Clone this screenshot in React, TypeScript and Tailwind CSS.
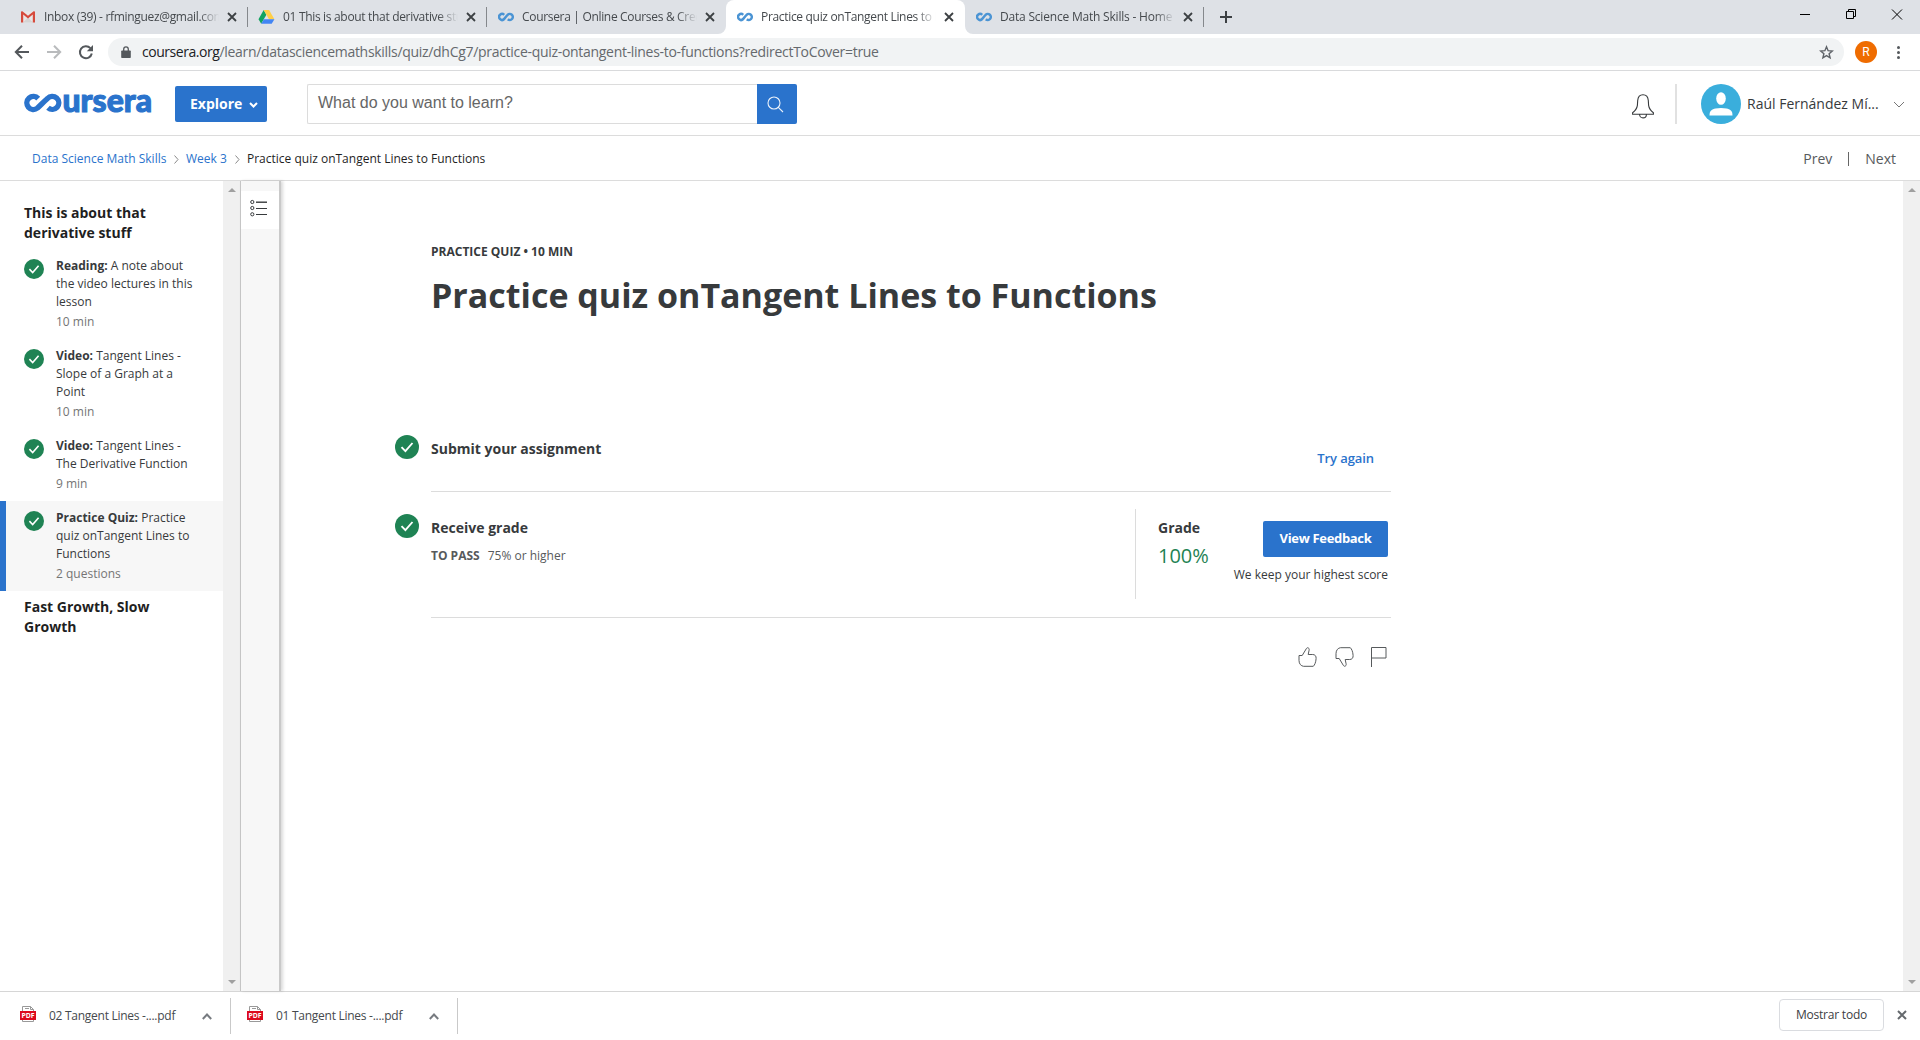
import type { ReactNode } from 'react';

function InfinityMark() {
  return (
    <svg width="16" height="10" viewBox="0 0 16 10" fill="none" stroke="#4b94d4" strokeWidth="2.5">
      <path d="M6.200 2.800A3 3 0 1 0 5.800 7.400C7 6.200 8 4.400 9.600 2.900A3 3 0 1 1 9.800 7.200" />
    </svg>
  );
}

function GmailIcon() {
  return (
    <svg width="16" height="16" viewBox="0 0 16 16">
      <path d="M2 2.5h12v11H2z" fill="#e9e7e7" />
      <path d="M3 13.5l5-5 5 5z" fill="#d5d3d3" />
      <path d="M1 13.5V3.2c0-.9.9-1.3 1.7-.8L8 6.8l5.300-4.400c.8-.5 1.700-.1 1.700.8v10.300h-2.200V5.600L8 9.600 3.200 5.600v7.900z" fill="#d64a3c" />
    </svg>
  );
}

function DriveIcon() {
  return (
    <svg width="17" height="16" viewBox="0 0 17 16">
      <path d="M5.700 1L0.500 10.200l2.700 4.600L8.400 5.700z" fill="#11a360" />
      <path d="M5.700 1h5.400l5.300 9.200H11z" fill="#ffcf48" />
      <path d="M5.900 10.200h10.500l-2.700 4.600H3.200z" fill="#4285f4" />
    </svg>
  );
}

function TabClose() {
  return (
    <svg width="10" height="10" viewBox="0 0 10 10" stroke="#3c4043" strokeWidth="1.8" className="shrink-0">
      <path d="M1 1l8 8M9 1L1 9" />
    </svg>
  );
}

function Tab({ icon, title, active, last, bare }: { icon: ReactNode; title: string; active?: boolean; last?: boolean; bare?: boolean }) {
  return (
    <div className={`relative flex h-[34px] w-[239px] shrink-0 items-center pl-[10px] ${active ? 'rounded-t-lg bg-white' : ''}`}>
      {active && (
        <>
          <svg className="absolute bottom-0 -left-2" width="8" height="8"><path d="M8 0v8H0a8 8 0 0 0 8-8z" fill="#fff" /></svg>
          <svg className="absolute -right-2 bottom-0" width="8" height="8"><path d="M0 0v8h8a8 8 0 0 1-8-8z" fill="#fff" /></svg>
        </>
      )}
      <div className="flex w-[17px] shrink-0 justify-center">{icon}</div>
      <div className={`ml-[8px] w-[175px] overflow-hidden text-xs whitespace-nowrap text-[#45494d] [mask-image:linear-gradient(to_right,#000_155px,transparent_175px)] ${last ? 'tracking-[-0.2px]' : 'tracking-[-0.32px]'}`}>{title}</div>
      <div className="ml-[8px]"><TabClose /></div>
      {!active && !bare && <div className="absolute top-[7px] right-0 h-5 w-px bg-[#85888c]" />}
    </div>
  );
}

function TabStrip() {
  return (
    <div className="flex h-[34px] bg-[#dee1e6] pl-[9px]">
      <Tab icon={<GmailIcon />} title="Inbox (39) - rfminguez@gmail.com" />
      <Tab icon={<DriveIcon />} title="01 This is about that derivative stuff" />
      <Tab icon={<InfinityMark />} title="Coursera | Online Courses & Credentials" bare />
      <Tab icon={<InfinityMark />} title="Practice quiz onTangent Lines to Functions" active />
      <Tab icon={<InfinityMark />} title="Data Science Math Skills - Home" last />
      <svg className="mt-[11px] ml-4" width="13" height="13" stroke="#3c4043" strokeWidth="2"><path d="M6 0v12M0 6h12" /></svg>
      <svg className="mt-[9px] mr-[17px] ml-auto" width="103" height="11" fill="none" stroke="#000">
        <path d="M0 5.500h10M46.500 2.500h7v7h-7zM48.500 2.500v-2h7v7h-2M92 .5l10 10M102 .5l-10 10" />
      </svg>
    </div>
  );
}

function AddressBar() {
  return (
    <div className="flex h-[37px] items-center border-b border-[#d9dadc] bg-white">
      <svg className="ml-[14px]" width="80" height="16" viewBox="0 0 80 16" fill="none" strokeWidth="2">
        <path d="M15 8H2M8 1.700L1.800 8 8 14.300" stroke="#54585c" />
        <path d="M33 8h13M40 1.700L46.200 8 40 14.300" stroke="#b9bbbd" />
        <path d="M76.400 4.200A6 6 0 1 0 77.800 9.500" stroke="#54585c" />
        <path d="M79 1v6.200h-6.200z" fill="#54585c" />
      </svg>
      <div className="ml-[14px] flex h-7 w-[1736px] items-center rounded-full bg-[#f1f3f4] pr-[10px] pl-[13px]">
        <svg width="10" height="13" viewBox="0 0 10 13">
          <path d="M1 4.500h8q.8 0 .8.800v5.900q0 .8-.8.800H1q-.8 0-.8-.8V5.300q0-.8.8-.8z" fill="#54585c" />
          <path d="M2.700 5V3.200a2.300 2.300 0 0 1 4.600 0V5" fill="none" stroke="#54585c" strokeWidth="1.300" />
        </svg>
        <div className="ml-[11px] text-sm whitespace-nowrap text-[#65696d]">
          <span className="tracking-[-0.46px] text-[#202124]">coursera.org</span>
          <span className="tracking-[-0.3px]">/learn/datasciencemathskills/quiz/dhCg7/practice-quiz-ontangent-lines-to-functions?redirectToCover=true</span>
        </div>
        <svg className="ml-auto" width="15" height="15" viewBox="0 0 15 15" fill="none" stroke="#5f6368" strokeWidth="1.400">
          <path d="M7.500 1.800l1.600 3.900 4.200.3-3.200 2.700 1 4.100-3.600-2.200-3.600 2.200 1-4.100L1.700 6l4.200-.3z" />
        </svg>
      </div>
      <div className="ml-[11px] flex size-[22px] items-center justify-center rounded-full bg-[#ef6c00] font-['Roboto'] text-[12px] text-white">R</div>
      <div className="ml-[20px] flex flex-col gap-[2px]">
        <i className="size-[3px] rounded-full bg-[#54585c]" />
        <i className="size-[3px] rounded-full bg-[#54585c]" />
        <i className="size-[3px] rounded-full bg-[#54585c]" />
      </div>
    </div>
  );
}

function Logo() {
  return (
    <svg className="-mt-[2px] ml-6" width="128" height="24" viewBox="0 0 128 24">
      <path d="M14.200 7.600A6.500 6.500 0 1 0 13.500 17C17 13.800 19.500 11 23.500 7.500A6.500 6.500 0 1 1 24 16.800" fill="none" stroke="#2a73cc" strokeWidth="5.400" />
      <text x="38.500" y="20.600" textLength="89.500" lengthAdjust="spacingAndGlyphs" fontSize="33" fontWeight="900" fontFamily="Lato, sans-serif" fill="#2a73cc" stroke="#2a73cc" strokeWidth="1.100">ursera</text>
    </svg>
  );
}

function Header() {
  return (
    <header className="flex h-[65px] items-center border-b border-[#dcdcdc] bg-white pt-[2px]">
      <Logo />
      <button className="ml-[23px] flex h-9 w-[92px] items-center rounded-[2px] bg-[#2a73cc] pl-[15px] text-sm font-bold text-white">
        Explore
        <svg className="mt-[2px] ml-[7px]" width="9" height="6" fill="none" stroke="#fff" strokeWidth="2"><path d="M1 1l3.500 3.500L8 1" /></svg>
      </button>
      <div className="ml-10 flex h-10 w-[490px]">
        <div className="flex flex-1 items-center rounded-l-[2px] border border-r-0 border-[#dcdcdc] pb-[2px] pl-[10px] font-['Liberation_Sans'] text-base text-[#666]">What do you want to learn?</div>
        <div className="flex w-10 items-center justify-center rounded-r-[2px] bg-[#2a73cc] pr-1">
          <svg width="17" height="17" fill="none" stroke="#fff" strokeOpacity=".9" strokeWidth="1.100"><circle cx="7" cy="7" r="6" /><path d="M11.300 11.300l4.700 4.700" /></svg>
        </div>
      </div>
      <svg className="mt-1 ml-auto" width="22" height="25" viewBox="0 0 22 25" fill="none" stroke="#373a3c" strokeWidth="1.100">
        <path d="M.600 20.300v-1.600C3.200 16.800 4.900 14.400 5.400 11.300L5.700 6.500C6 2.800 8 .7 11 .700s5 2.100 5.300 5.800l.3 4.800c.5 3.100 2.200 5.500 4.800 7.400v1.600zM7.600 20.500a3.400 3.400 0 0 0 6.800 0" />
      </svg>
      <div className="ml-[21px] h-10 w-[2px] bg-[#e1e1e1]" />
      <svg className="ml-6" width="40" height="40" viewBox="0 0 40 40">
        <circle cx="20" cy="20" r="20" fill="#3aaedc" />
        <ellipse cx="20" cy="14.500" rx="4.800" ry="6.300" fill="#fff" />
        <path d="M8.500 31.500c0-5 2.500-6 6-6.900 3.500-.9 7.500-.9 11 0 3.500.9 6 1.900 6 6.900z" fill="#fff" />
      </svg>
      <div className="ml-[6px] w-[132px] text-sm whitespace-nowrap text-[#373a3c]">Raúl Fernández Mí...</div>
      <svg className="mt-[2px] mr-[15px] ml-[14px]" width="12" height="8" fill="none" stroke="#777"><path d="M1 1l5 5 5-5" /></svg>
    </header>
  );
}

function Breadcrumb() {
  const chevron = <svg width="5" height="9" fill="none" stroke="#888"><path d="M.5.500l3.500 4-3.500 4" /></svg>;
  return (
    <nav className="flex h-[45px] items-center border-b border-[#dcdcdc] bg-white pt-[2px] text-xs whitespace-nowrap text-[#2a73cc]">
      <span className="ml-8 w-[135px]">Data Science Math Skills</span>
      <span className="ml-[7px] w-[12px]">{chevron}</span>
      <span className="w-[41px]">Week 3</span>
      <span className="ml-[8px] w-[12px]">{chevron}</span>
      <span className="text-[#1f1f1f]">Practice quiz onTangent Lines to Functions</span>
      <span className="ml-auto text-sm text-[#575a5c]">Prev</span>
      <i className="mx-4 h-[14px] w-px bg-[#666]" />
      <span className="mr-6 text-sm text-[#575a5c]">Next</span>
    </nav>
  );
}

function Check({ size }: { size: number }) {
  return (
    <svg width={size} height={size} viewBox="0 0 24 24" className="shrink-0">
      <circle cx="12" cy="12" r="12" fill="#1f8354" />
      <path d="M6.500 12.200l3.900 4 7.100-8.200" fill="none" stroke="#fff" strokeWidth="1.900" />
    </svg>
  );
}

function Lesson({ kind, title, meta, active }: { kind: string; title: ReactNode; meta: string; active?: boolean }) {
  return (
    <div className={`flex border-l-[6px] py-2 pl-[18px] text-xs leading-[18px] text-[#373a3c] ${active ? 'border-[#2a73cc] bg-[#f7f7f7]' : 'border-transparent'}`}>
      <div className="mt-[2px] w-8"><Check size={20} /></div>
      <div className="whitespace-nowrap">
        <div><b>{kind}:</b> {title}</div>
        <div className="mt-[2px] text-[#757575]">{meta}</div>
      </div>
    </div>
  );
}

function ScrollBar() {
  return (
    <div className="flex w-[17px] shrink-0 flex-col items-center justify-between bg-[#f0f0f0] py-[7px]">
      <svg width="8" height="4"><path d="M0 4L4 0l4 4z" fill="#a0a0a0" /></svg>
      <svg width="8" height="4"><path d="M0 0h8L4 4z" fill="#a0a0a0" /></svg>
    </div>
  );
}

function Sidebar() {
  return (
    <aside className="w-[223px] shrink-0 bg-white pt-[22px]">
      <h2 className="mb-[6px] pl-6 text-sm leading-5 font-bold text-[#1f1f1f]">This is about that<br />derivative stuff</h2>
      <Lesson kind="Reading" title={<>A note about<br />the video lectures in this<br />lesson</>} meta="10 min" />
      <Lesson kind="Video" title={<>Tangent Lines -<br />Slope of a Graph at a<br />Point</>} meta="10 min" />
      <Lesson kind="Video" title={<>Tangent Lines -<br />The Derivative Function</>} meta="9 min" />
      <Lesson kind="Practice Quiz" title={<>Practice<br />quiz onTangent Lines to<br />Functions</>} meta="2 questions" active />
      <h2 className="mt-[6px] pl-6 text-sm leading-5 font-bold text-[#1f1f1f]">Fast Growth, Slow<br />Growth</h2>
    </aside>
  );
}

function Rail() {
  return (
    <div className="z-10 w-[41px] shrink-0 border-r-2 border-l border-r-[#c9c9c9] border-l-[#c5c5c5] bg-[#f7f7f7] pt-[10px] shadow-[2px_0_3px_rgba(0,0,0,0.15)]">
      <div className="h-[38px] bg-white pt-[8px] pl-[9px]">
        <svg width="18" height="18" fill="none" stroke="#373a3c">
          <circle cx="2.300" cy="3" r="1.600" /><circle cx="2.300" cy="9" r="1.600" /><circle cx="2.300" cy="15.300" r="1.600" />
          <path d="M6 3.200h11" strokeWidth="1.400" /><path d="M6 9.500h11M6 15.500h11" />
        </svg>
      </div>
    </div>
  );
}

function Quiz() {
  const thumb = 'M1 8.500h3.200L8.300 1.700C8.900.7 9.700.5 10.400 1c.8.500.9 1.300.7 2.200L10.200 7.500h4.500c2.300 0 3.600 1.600 3.400 4-.2 4-1.500 6.500-2.800 7.800H5.500C3.200 19 1 17 1 13.500z';
  return (
    <main className="flex-1 bg-white pl-[114px] text-[#373a3c]">
      <div className="w-[996px] pl-9 leading-5">
        <div className="pt-[61px] text-xs leading-5 font-bold">PRACTICE QUIZ • 10 MIN</div>
        <h1 className="mt-[9px] text-[34px] leading-12 font-bold whitespace-nowrap">Practice quiz onTangent Lines to Functions</h1>
      </div>
      <section className="mt-[116px] flex w-[996px]">
        <div className="w-9"><Check size={24} /></div>
        <div className="flex h-[57px] flex-1 justify-between border-b border-[#dcdcdc]">
          <h3 className="mt-[4px] text-sm leading-5 font-bold">Submit your assignment</h3>
          <a className="mt-[13px] mr-[17px] text-[13px] leading-5 font-semibold tracking-[-0.08px] text-[#2a73cc]">Try again</a>
        </div>
      </section>
      <section className="flex w-[996px]">
        <div className="w-9 pt-[22px]"><Check size={24} /></div>
        <div className="flex h-[126px] flex-1 border-b border-[#dcdcdc] pt-[17px]">
          <div className="w-[704px] pt-[9px]">
            <h3 className="text-sm leading-5 font-bold">Receive grade</h3>
            <div className="mt-2 flex gap-[8px] text-xs leading-5 text-[#575a5c]"><b>TO PASS</b><span>75% or higher</span></div>
          </div>
          <div className="flex h-[90px] flex-1 border-l border-[#dcdcdc] pt-[9px] pl-[22px]">
            <div>
              <h3 className="text-sm leading-5 font-bold">Grade</h3>
              <div className="mt-[3px] text-xl leading-[30px] text-[#1f8354]">100%</div>
            </div>
            <div className="mt-[3px] mr-[3px] ml-auto flex flex-col items-end">
              <button className="h-9 w-[125px] rounded-[2px] bg-[#2a73cc] text-[13px] font-bold tracking-[-0.33px] text-white">View Feedback</button>
              <div className="mt-2 text-xs leading-5">We keep your highest score</div>
            </div>
          </div>
        </div>
      </section>
      <div className="mt-[29px] flex w-[996px] justify-end pr-[4px]">
        <svg width="20" height="20" fill="none" stroke="#575a5c"><path d={thumb} /></svg>
        <svg className="ml-[17px]" width="20" height="20" fill="none" stroke="#575a5c"><path transform="matrix(1 0 0 -1 0 20)" d={thumb} /></svg>
        <svg className="ml-[16px]" width="16" height="20" fill="none" stroke="#575a5c"><path d="M.500 20V.500h14.500v10.500H.500" /></svg>
      </div>
    </main>
  );
}

function Download({ name }: { name: string }) {
  return (
    <div className="flex h-9 w-[227px] items-center border-r border-[#c9c9c9]">
      <svg className="mb-1 ml-[16px]" width="16" height="16" viewBox="0 0 16 16">
        <path d="M2.500 15.500V.500h8l3 3v12z" fill="#fff" stroke="#999" />
        <path d="M5 2.500h4M10.500.500v3h3" fill="none" stroke="#999" />
        <rect y="5" width="16" height="9" fill="#dc0a1e" />
        <text x="8" y="12" textAnchor="middle" fontSize="6.800" fontWeight="700" fontFamily="Open Sans, sans-serif" fill="#fff">PDF</text>
      </svg>
      <span className="ml-[13px] w-[153px] text-xs tracking-[-0.27px] whitespace-nowrap text-[#45494d]">{name}</span>
      <svg width="10" height="7" fill="none" stroke="#777b80" strokeWidth="2"><path d="M.800 6L5 1.500 9.200 6" /></svg>
    </div>
  );
}

function DownloadShelf() {
  return (
    <footer className="flex h-[49px] items-center border-t border-[#d6d6d6] bg-white pl-1">
      <Download name="02 Tangent Lines -....pdf" />
      <Download name="01 Tangent Lines -....pdf" />
      <button className="mr-[13px] mb-[3px] ml-auto h-8 w-[105px] rounded border border-[#dadce0] text-xs font-medium tracking-[-0.22px] text-[#3c4043]">Mostrar todo</button>
      <svg className="mr-[13px] mb-[3px]" width="10" height="10" stroke="#65696d" strokeWidth="2"><path d="M1 1l8 8M9 1L1 9" /></svg>
    </footer>
  );
}

export default function App() {
  return (
    <div className="flex h-[1040px] w-[1920px] flex-col overflow-hidden bg-white font-['Open_Sans',sans-serif]">
      <TabStrip />
      <AddressBar />
      <Header />
      <Breadcrumb />
      <div className="flex min-h-0 flex-1">
        <Sidebar />
        <ScrollBar />
        <Rail />
        <Quiz />
        <ScrollBar />
      </div>
      <DownloadShelf />
    </div>
  );
}
